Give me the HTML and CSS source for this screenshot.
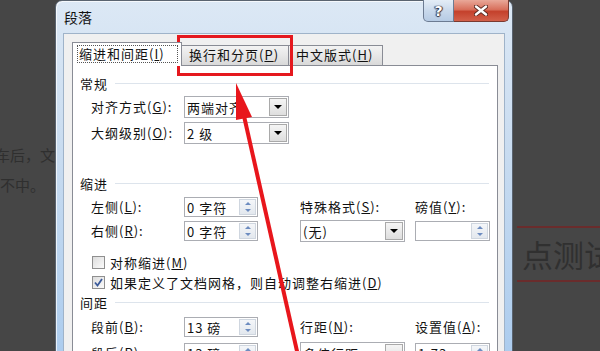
FILE: index.html
```html
<!DOCTYPE html>
<html lang="zh-CN">
<head>
    <meta charset="UTF-8">
    <meta name="viewport" content="width=device-width, initial-scale=1.0">
    <title>段落</title>
    <link rel="stylesheet" href="styles.css">
</head>
<body>
    <div class="screen">
        <div class="doc-left">
            <p class="doc-line first">车后，文</p>
            <p class="doc-line">不中。</p>
        </div>

        <div class="dialog">
            <div class="titlebar">
                <span class="title">段落</span>
                <div class="caption-buttons">
                    <span class="btn-help">?</span>
                    <span class="btn-close">
                        <svg width="14" height="11" viewBox="0 0 14 11">
                            <path d="M2 1.5 L12 9.5 M12 1.5 L2 9.5" stroke="#5a2a22" stroke-width="4.2" stroke-linecap="round"/>
                            <path d="M2 1.5 L12 9.5 M12 1.5 L2 9.5" stroke="#fff" stroke-width="2.4" stroke-linecap="round"/>
                        </svg>
                    </span>
                </div>
            </div>

            <div class="client">
                <div class="tabs">
                    <div class="tab active"><span class="focus">缩进和间距(<u>I</u>)</span></div>
                    <div class="tab">换行和分页(<u>P</u>)</div>
                    <div class="tab last">中文版式(<u>H</u>)</div>
                </div>

                <div class="panel">
                    <div class="group-title"><span>常规</span></div>
                    <div class="form-grid general">
                        <label>对齐方式(<u>G</u>):</label>
                        <div class="field combo"><span class="val">两端对齐</span><span class="drop"></span></div>
                        <label>大纲级别(<u>O</u>):</label>
                        <div class="field combo"><span class="val">2 级</span><span class="drop"></span></div>
                    </div>

                    <div class="group-title indent-title"><span>缩进</span></div>
                    <div class="form-grid rows-tight">
                        <label>左侧(<u>L</u>):</label>
                        <div class="field spin"><span class="val">0 字符</span><span class="spin-btns"><i class="up"></i><i class="down"></i></span></div>
                        <label>特殊格式(<u>S</u>):</label>
                        <label>磅值(<u>Y</u>):</label>
                        <label>右侧(<u>R</u>):</label>
                        <div class="field spin"><span class="val">0 字符</span><span class="spin-btns"><i class="up"></i><i class="down"></i></span></div>
                        <div class="field combo"><span class="val">(无)</span><span class="drop"></span></div>
                        <div class="field spin small"><span class="val"></span><span class="spin-btns"><i class="up"></i><i class="down"></i></span></div>
                    </div>

                    <div class="check-row first-check">
                        <span class="checkbox"></span>
                        <span>对称缩进(<u>M</u>)</span>
                    </div>
                    <div class="check-row">
                        <span class="checkbox checked">
                            <svg width="11" height="11" viewBox="0 0 11 11"><path d="M2 5.5 L4.5 8.5 L9 2" fill="none" stroke="#3b5a9a" stroke-width="1.8"/></svg>
                        </span>
                        <span>如果定义了文档网格，则自动调整右缩进(<u>D</u>)</span>
                    </div>

                    <div class="group-title spacing-title"><span>间距</span></div>
                    <div class="form-grid spacing">
                        <label>段前(<u>B</u>):</label>
                        <div class="field spin"><span class="val">13 磅</span><span class="spin-btns"><i class="up"></i><i class="down"></i></span></div>
                        <label>行距(<u>N</u>):</label>
                        <label>设置值(<u>A</u>):</label>
                        <label>段后(<u>R</u>):</label>
                        <div class="field spin"><span class="val">13 磅</span><span class="spin-btns"><i class="up"></i><i class="down"></i></span></div>
                        <div class="field combo"><span class="val">多倍行距</span><span class="drop"></span></div>
                        <div class="field spin small"><span class="val">1.73</span><span class="spin-btns"><i class="up"></i><i class="down"></i></span></div>
                    </div>
                </div>
            </div>
        </div>

        <div class="doc-right">
            <div class="heading-band">点测试</div>
        </div>

        <div class="callout-box"></div>
        <svg class="arrow" width="600" height="351" viewBox="0 0 600 351">
            <line x1="244" y1="116" x2="299" y2="360" stroke="#e8161c" stroke-width="4"/>
            <polygon points="236,83 252,117 236,120" fill="#e8161c"/>
        </svg>
    </div>
</body>
</html>
```

FILE: styles.css
```css
* {
    margin: 0;
    padding: 0;
    box-sizing: border-box;
}

body {
    background: #464646;
    font-family: "Noto Sans CJK SC", "Liberation Sans", sans-serif;
}

.screen {
    position: relative;
    width: 600px;
    height: 351px;
    overflow: hidden;
    display: flex;
    background: #464646;
}

/* document behind the dialog */
.doc-left {
    width: 55px;
    flex: none;
    overflow: hidden;
    padding-top: 144px;
}

.doc-line {
    white-space: nowrap;
    font-size: 15px;
    line-height: 22px;
    color: #2f2f2f;
    margin-bottom: 8px;
}

.doc-line.first {
    margin-left: -5px;
}

.doc-right {
    flex: 1;
    overflow: hidden;
    padding-top: 226px;
    padding-left: 4px;
}

.heading-band {
    border-top: 2px solid #6a2c2c;
    border-bottom: 2px solid #6a2c2c;
    height: 56px;
    padding-left: 5px;
    font-size: 31px;
    line-height: 52px;
    white-space: nowrap;
    color: #303030;
}

/* dialog window */
.dialog {
    width: 458px;
    height: 370px;
    flex: none;
    border: 1px solid #5a6470;
    border-radius: 7px 7px 0 0;
    background: linear-gradient(#dce8f5 0%, #c9dcf0 40%, #aacbee 100%);
    box-shadow: inset 1px 1px 0 rgba(255, 255, 255, 0.7);
}

.titlebar {
    height: 32px;
    display: flex;
    justify-content: space-between;
    padding-left: 8px;
    padding-right: 3px;
}

.title {
    font-size: 14px;
    line-height: 32px;
    color: #111;
}

.caption-buttons {
    display: flex;
    height: 22px;
    margin-top: -1px;
}

.btn-help,
.btn-close {
    display: flex;
    align-items: center;
    justify-content: center;
    height: 22px;
    border: 1px solid #6c7b92;
    border-top: none;
}

.btn-help {
    width: 31px;
    border-radius: 0 0 0 5px;
    background: linear-gradient(#e4edf7 0%, #c9d9ec 50%, #b6cbe4 100%);
    color: #fff;
    font: bold 14px "DejaVu Sans", sans-serif;
    text-shadow: 0 0 1px #334, 1px 0 1px #334, -1px 0 1px #334, 0 1px 1px #334;
}

.btn-close {
    width: 55px;
    border-left: none;
    border-color: #7a3a30;
    border-radius: 0 0 5px 0;
    background: linear-gradient(#e9a899 0%, #d8705c 45%, #c4412c 55%, #d2604a 100%);
}

.client {
    margin: 0 7px;
    height: 340px;
    border: 1px solid #9fb3c9;
    background: #f0f0f0;
    padding: 8px 8px 0 8px;
}

/* tabs */
.tabs {
    display: flex;
    align-items: flex-end;
    height: 23px;
    font-size: 13px;
    letter-spacing: 1px;
    color: #111;
}

.tab {
    height: 20px;
    line-height: 18px;
    padding: 0 7px;
    border: 1px solid #898c95;
    border-bottom: none;
    background: linear-gradient(#f3f3f3 0%, #e7e7e7 50%, #d9d9d9 100%);
    white-space: nowrap;
}

.tab + .tab {
    margin-left: -1px;
}

.tab.active {
    position: relative;
    z-index: 1;
    width: 110px;
    height: 24px;
    margin-bottom: -1px;
    padding: 2px 3px 0 4px;
    background: #fff;
}

.tab:nth-child(2) {
    width: 108px;
}

.tab.last {
    width: 95px;
}

.focus {
    display: block;
    height: 18px;
    line-height: 16px;
    padding: 0 0 0 1px;
    border: 1px dotted #555;
}

.panel {
    width: 426px;
    height: 320px;
    border: 1px solid #898c95;
    background: #fff;
    padding: 8px 8px 0 7px;
    font-size: 13px;
    letter-spacing: 1px;
    color: #111;
}

.group-title {
    display: flex;
    align-items: center;
    height: 18px;
    gap: 7px;
}

.group-title::after {
    content: "";
    flex: 1;
    height: 1px;
    background: #dde4ec;
}

.indent-title {
    margin-top: 30px;
}

.spacing-title {
    margin-top: 2px;
}

.form-grid {
    display: grid;
    grid-template-columns: 93px 116px 115px 75px;
    grid-auto-rows: 22px;
    row-gap: 4px;
    align-items: center;
    margin-left: 11px;
    margin-top: 4px;
}

.form-grid.general {
    grid-template-columns: 93px 106px;
}

.form-grid.rows-tight {
    row-gap: 2px;
}

.form-grid.spacing {
    margin-top: 5px;
}

label {
    white-space: nowrap;
    line-height: 22px;
}

/* inputs */
.field {
    display: flex;
    align-items: center;
    border: 1px solid #abadb3;
    background: #fff;
    white-space: nowrap;
}

.field .val {
    flex: 1;
    padding-left: 2px;
    overflow: hidden;
}

.combo {
    width: 105px;
    height: 22px;
    padding-right: 1px;
}

.drop {
    flex: none;
    width: 18px;
    height: 18px;
    border: 1px solid #a9a9a9;
    background: linear-gradient(#f5f5f5, #dedede);
    display: flex;
    align-items: center;
    justify-content: center;
}

.drop::before {
    content: "";
    border-left: 4px solid transparent;
    border-right: 4px solid transparent;
    border-top: 4px solid #000;
}

.spin {
    width: 74px;
    height: 20px;
    padding-right: 1px;
}

.spin.small {
    width: 75px;
}

.spin-btns {
    flex: none;
    width: 17px;
    height: 16px;
    display: flex;
    flex-direction: column;
    border: 1px solid #cfd6df;
    background: linear-gradient(#f4f6f9, #e3e8ee);
}

.spin-btns i {
    flex: 1;
    display: flex;
    align-items: center;
    justify-content: center;
}

.spin-btns i::before {
    content: "";
    border-left: 3px solid transparent;
    border-right: 3px solid transparent;
}

.spin-btns .up::before {
    border-bottom: 3px solid #6d8cc0;
}

.spin-btns .down::before {
    border-top: 3px solid #6d8cc0;
}

/* checkboxes */
.check-row {
    display: flex;
    align-items: center;
    gap: 5px;
    height: 18px;
    margin-top: 2px;
    margin-left: 12px;
    white-space: nowrap;
}

.check-row.first-check {
    margin-top: 11px;
}

.checkbox {
    width: 13px;
    height: 13px;
    border: 1px solid #8f8f8f;
    background: linear-gradient(135deg, #dcdcdc, #fbfbfb);
    display: flex;
    align-items: center;
    justify-content: center;
}

/* annotation overlay */
.callout-box {
    position: absolute;
    left: 177px;
    top: 35px;
    width: 116px;
    height: 41px;
    border: 3px solid #e5181e;
}

.arrow {
    position: absolute;
    left: 0;
    top: 0;
}
```
